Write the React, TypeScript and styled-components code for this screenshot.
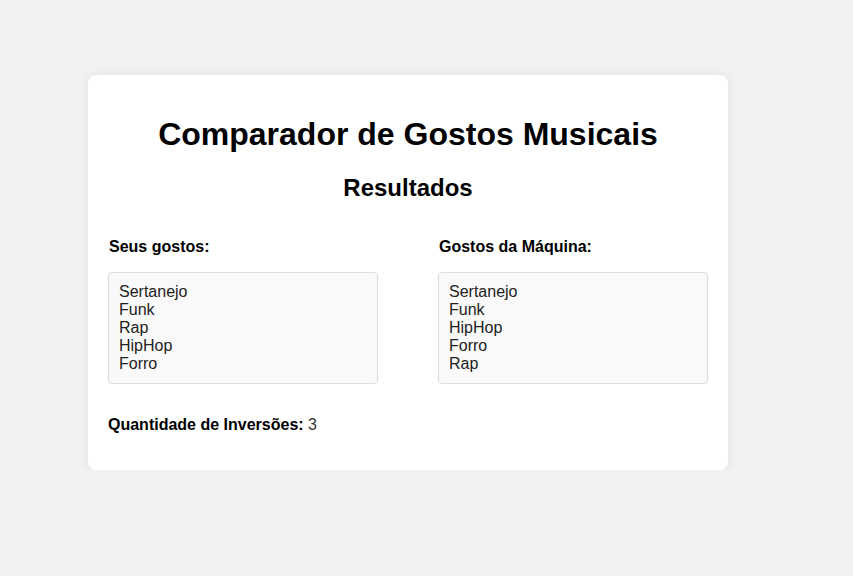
import React from "react";
import styled, { createGlobalStyle } from "styled-components";

const Global = createGlobalStyle`
  html, body { margin: 0; padding: 0; background: #f2f2f2; }
  body { font-family: "Liberation Sans", Arial, sans-serif; color: #000; }
`;

const Page = styled.div`
  padding: 75px 0 0 88px;
`;

const Card = styled.div`
  width: 640px;
  box-sizing: border-box;
  background: #fff;
  border-radius: 8px;
  padding: 20px;
  box-shadow: 0 0 10px rgba(0, 0, 0, 0.08);
  display: flex;
  flex-direction: column;
`;

const Title = styled.h1`
  font-size: 32px;
  font-weight: bold;
  text-align: center;
  margin: 21px 0 21px;
`;

const Subtitle = styled.h2`
  font-size: 24px;
  font-weight: bold;
  text-align: center;
  margin: 0 0 20px;
`;

const Columns = styled.div`
  display: flex;
  justify-content: space-between;
`;

const Column = styled.div`
  width: 270px;
  display: flex;
  flex-direction: column;
`;

const Label = styled.p`
  font-weight: bold;
  font-size: 16px;
  margin: 16px 0;
  padding-left: 1px;
`;

const ListBox = styled.div`
  border: 1px solid #ddd;
  border-radius: 4px;
  background: #f9f9f9;
  padding: 10px;
  font-size: 16px;
  line-height: 18px;
  color: #222;
`;

const Item = styled.div``;

const Result = styled.p`
  font-size: 16px;
  margin: 32px 0 16px;
  color: #333;
  & strong { color: #000; }
`;

const user = ["Sertanejo", "Funk", "Rap", "HipHop", "Forro"];
const machine = ["Sertanejo", "Funk", "HipHop", "Forro", "Rap"];

export default function App() {
  return (
    <>
      <Global />
      <Page>
        <Card>
          <Title>Comparador de Gostos Musicais</Title>
          <Subtitle>Resultados</Subtitle>
          <Columns>
            <Column>
              <Label>Seus gostos:</Label>
              <ListBox>
                {user.map((g) => (
                  <Item key={g}>{g}</Item>
                ))}
              </ListBox>
            </Column>
            <Column>
              <Label>Gostos da Máquina:</Label>
              <ListBox>
                {machine.map((g) => (
                  <Item key={g}>{g}</Item>
                ))}
              </ListBox>
            </Column>
          </Columns>
          <Result>
            <strong>Quantidade de Inversões:</strong> 3
          </Result>
        </Card>
      </Page>
    </>
  );
}
